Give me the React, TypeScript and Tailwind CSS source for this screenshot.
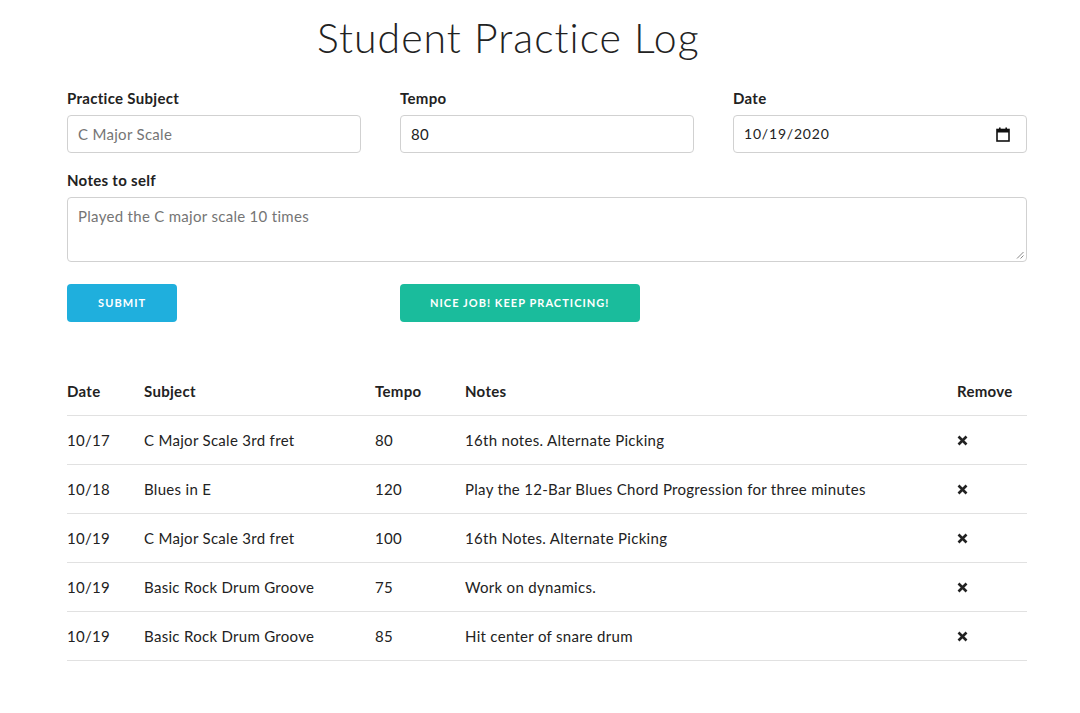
import React from "react";

const rows = [
  { date: "10/17", subject: "C Major Scale 3rd fret", tempo: "80", notes: "16th notes. Alternate Picking" },
  { date: "10/18", subject: "Blues in E", tempo: "120", notes: "Play the 12-Bar Blues Chord Progression for three minutes" },
  { date: "10/19", subject: "C Major Scale 3rd fret", tempo: "100", notes: "16th Notes. Alternate Picking" },
  { date: "10/19", subject: "Basic Rock Drum Groove", tempo: "75", notes: "Work on dynamics." },
  { date: "10/19", subject: "Basic Rock Drum Groove", tempo: "85", notes: "Hit center of snare drum" },
];

function XIcon() {
  return (
    <svg width="11" height="11" viewBox="0 0 11 11" className="block">
      <path d="M1.5 1.5 L9.5 9.5 M9.5 1.5 L1.5 9.5" stroke="#222" strokeWidth="2.6" strokeLinecap="butt" />
    </svg>
  );
}

function CalIcon() {
  return (
    <svg width="14" height="15" viewBox="0 0 14 15">
      <rect x="1" y="2.5" width="12" height="11.5" fill="none" stroke="#111" strokeWidth="1.6" />
      <rect x="1" y="2.5" width="12" height="3" fill="#111" />
      <rect x="3" y="0.5" width="1.6" height="3" fill="#111" />
      <rect x="9.4" y="0.5" width="1.6" height="3" fill="#111" />
    </svg>
  );
}

function Grip() {
  return (
    <svg width="8" height="8" viewBox="0 0 8 8" className="absolute right-[2px] bottom-[2px]">
      <path d="M7.5 1 L1 7.5 M7.5 4.5 L4.5 7.5" stroke="#888" strokeWidth="1" />
    </svg>
  );
}

export default function App() {
  return (
    <div className="min-h-[713px] bg-white text-[#222] font-['Lato','Noto_Sans',sans-serif] text-[15px] leading-[24px] tracking-[0.3px]">
      <div className="w-[960px] ml-[67px]">
        <h1 className="pl-[250px] pt-[14px] text-[41px] leading-[48px] font-light tracking-[1px] text-[#222]">
          Student Practice Log
        </h1>

        <div className="mt-[24px] grid grid-cols-3 gap-x-[39px]">
          <div>
            <div className="font-bold mb-[5px]">Practice Subject</div>
            <div className="h-[38px] border border-[#D1D1D1] rounded-[4px] px-[10px] flex items-center text-[#757575]">
              C Major Scale
            </div>
          </div>
          <div>
            <div className="font-bold mb-[5px]">Tempo</div>
            <div className="h-[38px] border border-[#D1D1D1] rounded-[4px] px-[10px] flex items-center text-[#222]">
              80
            </div>
          </div>
          <div>
            <div className="font-bold mb-[5px]">Date</div>
            <div className="h-[38px] border border-[#D1D1D1] rounded-[4px] pl-[10px] pr-[16px] flex items-center justify-between text-[#222] text-[14px]">
              <span className="tracking-[0.8px]">10/19/2020</span>
              <CalIcon />
            </div>
          </div>
        </div>

        <div className="mt-[15px]">
          <div className="font-bold mb-[5px]">Notes to self</div>
          <div className="relative h-[65px] border border-[#D1D1D1] rounded-[4px] px-[10px] pt-[6px] text-[#757575]">
            Played the C major scale 10 times
            <Grip />
          </div>
        </div>

        <div className="mt-[22px] grid grid-cols-3 gap-x-[39px]">
          <div>
            <button className="h-[38px] px-[31px] rounded-[4px] bg-[#1FAFDD] text-white text-[11px] font-bold tracking-[1.1px] uppercase">
              Submit
            </button>
          </div>
          <div>
            <button className="h-[38px] px-[30px] rounded-[4px] bg-[#1ABC9C] text-white text-[11px] font-bold tracking-[1.05px] uppercase">
              Nice job! Keep practicing!
            </button>
          </div>
        </div>

        <table className="mt-[45px] w-full table-fixed border-collapse text-left">
          <colgroup>
            <col className="w-[62px]" />
            <col className="w-[231px]" />
            <col className="w-[90px]" />
            <col />
            <col className="w-[85px]" />
          </colgroup>
          <thead>
            <tr className="border-b border-[#E1E1E1]">
              <th className="py-[12px] pr-[15px] font-bold h-[48px]">Date</th>
              <th className="py-[12px] px-[15px] font-bold">Subject</th>
              <th className="py-[12px] px-[15px] font-bold">Tempo</th>
              <th className="py-[12px] px-[15px] font-bold">Notes</th>
              <th className="py-[12px] pl-[15px] font-bold">Remove</th>
            </tr>
          </thead>
          <tbody>
            {rows.map((r, i) => (
              <tr key={i} className="border-b border-[#E1E1E1]">
                <td className="py-[12px] pr-[15px] h-[48px]">{r.date}</td>
                <td className="py-[12px] px-[15px]">{r.subject}</td>
                <td className="py-[12px] px-[15px]">{r.tempo}</td>
                <td className="py-[12px] px-[15px] whitespace-nowrap">{r.notes}</td>
                <td className="py-[12px] pl-[15px]">
                  <div className="h-[24px] flex items-center"><XIcon /></div>
                </td>
              </tr>
            ))}
          </tbody>
        </table>
      </div>
    </div>
  );
}
